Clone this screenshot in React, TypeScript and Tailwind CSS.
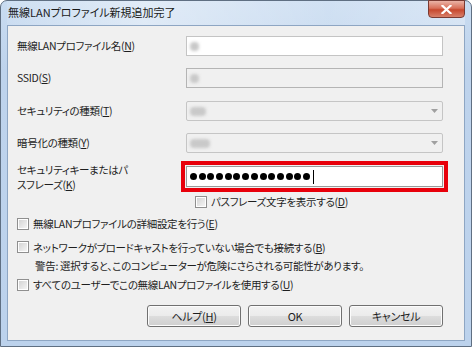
import React from "react";

const font = "font-['Noto_Sans_CJK_JP','Noto_Sans',sans-serif] [font-feature-settings:'palt']";

const Key = ({ k }: { k: string }) => (
  <>
    (<span className="underline underline-offset-[1px]">{k}</span>)
  </>
);

const CheckBox = () => (
  <span className="box-border inline-block h-[12px] w-[12px] shrink-0 border border-[#8f8f8f] bg-white p-px">
    <span className="block h-full w-full bg-[linear-gradient(135deg,#d4d4d4,#f4f4f4)]" />
  </span>
);

const Blur = ({ w }: { w: number }) => (
  <span
    className="ml-[3px] block h-[9px] rounded-sm bg-[#c9c9c9] blur-[1.5px]"
    style={{ width: w }}
  />
);

const SelectBox = ({ w }: { w: number }) => (
  <div className="flex h-[20px] w-[257px] items-center justify-between rounded-[2px] border border-[#c5c5c5] bg-[#f0f0f0] pr-[4px]">
    <Blur w={w} />
    <svg width="7" height="4" viewBox="0 0 7 4">
      <path d="M0 0h7L3.5 4z" fill="#a0a0a0" />
    </svg>
  </div>
);

const Button = ({ children }: { children: React.ReactNode }) => (
  <button className="flex h-[22px] w-[94px] items-center justify-center rounded-[3px] border border-[#707070] bg-[linear-gradient(#f2f2f2,#ebebeb_50%,#dddddd_50%,#cfcfcf)] text-[11px] text-[#1e1e1e] shadow-[inset_0_0_0_1px_#fcfcfc]">
    {children}
  </button>
);

export default function App() {
  return (
    <div
      className={`${font} flex h-[347px] w-[472px] flex-col rounded-t-[7px] border border-[#5f6f82] bg-[linear-gradient(#c9dcf1,#bed3ec_20%,#bcd2ec)] px-[6px] pb-[5px] text-[10.5px] tracking-[-0.3px] text-[#1e1e1e]`}
    >
      {/* title bar */}
      <div className="flex h-[24px] shrink-0 items-start justify-between bg-[linear-gradient(90deg,rgba(255,255,255,0.1),rgba(255,255,255,0.45)_30%,rgba(255,255,255,0.15)_70%,rgba(255,255,255,0.3))]">
        <span className="mt-[3px] pl-px text-[11px] leading-[16px] tracking-normal text-[#1a1a1a]">
          無線LANプロファイル新規追加完了
        </span>
        <div className="-mt-px flex h-[18px] w-[37px] items-center justify-center rounded-b-[4px] border border-[#7a3a32] bg-[linear-gradient(#eab3a6,#d8705a_45%,#c7482e_55%,#d8806a)]">
          <svg width="11" height="9" viewBox="0 0 11 9">
            <path d="M1.5 0.8l8 7.4M9.5 0.8l-8 7.4" stroke="#fff" strokeWidth="2.2" strokeLinecap="square" />
          </svg>
        </div>
      </div>

      {/* content */}
      <div className="flex flex-1 flex-col border border-[#8ea6c3] bg-[#f0f0f0] pl-[9px] pt-[10px]">
        <div className="flex items-center">
          <span className="w-[169px]">
            無線LANプロファイル名<Key k="N" />
          </span>
          <div className="flex h-[20px] w-[257px] items-center border border-[#c4c4c4] bg-white">
            <Blur w={9} />
          </div>
        </div>

        <div className="mt-[12px] flex items-center">
          <span className="w-[169px]">
            SSID<Key k="S" />
          </span>
          <div className="flex h-[20px] w-[257px] items-center border border-[#b4b4b4] bg-[#f0f0f0]">
            <Blur w={9} />
          </div>
        </div>

        <div className="mt-[13px] flex items-center">
          <span className="w-[169px]">
            セキュリティの種類<Key k="T" />
          </span>
          <SelectBox w={16} />
        </div>

        <div className="mt-[12px] flex items-center">
          <span className="w-[169px]">
            暗号化の種類<Key k="Y" />
          </span>
          <SelectBox w={20} />
        </div>

        <div className="mt-[8px] flex items-start">
          <span className="w-[164px] pt-[1px] leading-[15px]">
            セキュリティキーまたはパ
            <br />
            スフレーズ<Key k="K" />
          </span>
          <div className="border-[4px] border-[#e8000b] p-px">
            <div className="flex h-[21px] w-[257px] items-center gap-[1.7px] border border-[#9a9a9a] bg-white pl-[3px]">
              {Array.from({ length: 14 }).map((_, i) => (
                <span key={i} className="block h-[7px] w-[7px] rounded-full bg-black" />
              ))}
              <span className="ml-px block h-[14px] w-px bg-black" />
            </div>
          </div>
        </div>

        <div className="ml-[178px] mt-[2px] flex items-center gap-[4px]">
          <CheckBox />
          <span>
            パスフレーズ文字を表示する<Key k="D" />
          </span>
        </div>

        <div className="mt-[6px] flex items-center gap-[4px]">
          <CheckBox />
          <span>
            無線LANプロファイルの詳細設定を行う<Key k="E" />
          </span>
        </div>

        <div className="mt-[8px] flex items-center gap-[4px]">
          <CheckBox />
          <span>
            ネットワークがブロードキャストを行っていない場合でも接続する<Key k="B" />
          </span>
        </div>
        <div className="ml-[18px] mt-[3px]">
          警告: 選択すると、このコンピューターが危険にさらされる可能性があります。
        </div>

        <div className="mt-[3px] flex items-center gap-[4px]">
          <CheckBox />
          <span>
            すべてのユーザーでこの無線LANプロファイルを使用する<Key k="U" />
          </span>
        </div>

        <div className="mt-[12px] flex gap-[7px] pl-[130px]">
          <Button>
            ヘルプ<Key k="H" />
          </Button>
          <Button>OK</Button>
          <Button>キャンセル</Button>
        </div>
      </div>
    </div>
  );
}
